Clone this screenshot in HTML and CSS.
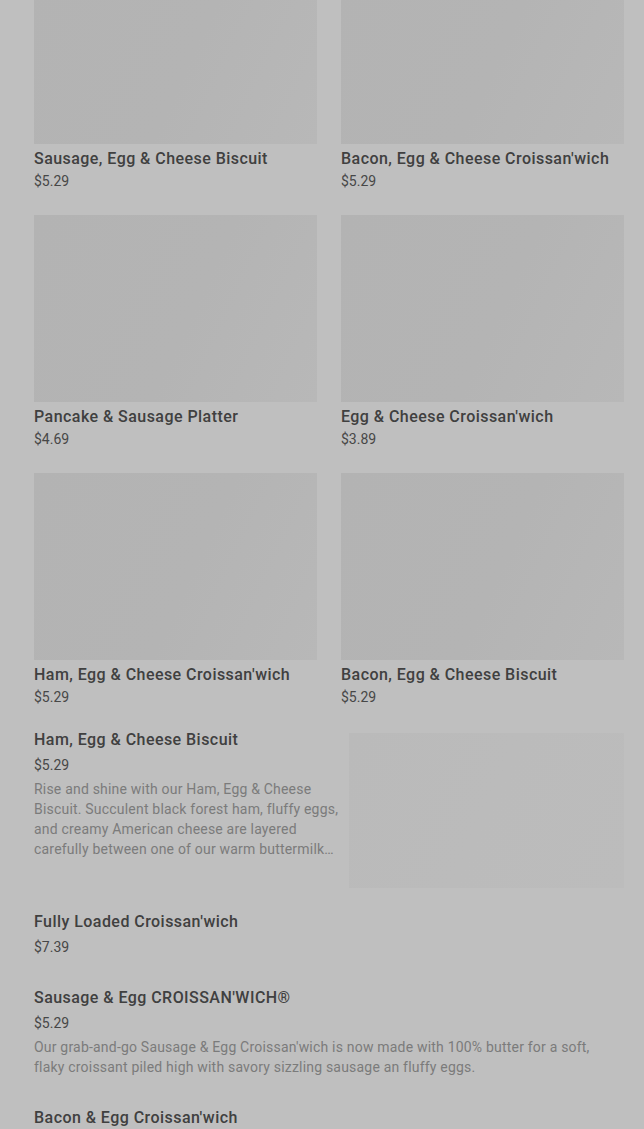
FILE: index.html
```html
<!DOCTYPE html>
<html>
<head>
  <title>Breakfast Menu</title>
  <link rel="stylesheet" href="styles.css">
</head>
<body>

  <div class="menu">
    <div class="card-grid">
      <div class="card">
        <div class="card-img"></div>
        <div class="item-title">Sausage, Egg &amp; Cheese Biscuit</div>
        <div class="item-price">$5.29</div>
      </div>
      <div class="card">
        <div class="card-img"></div>
        <div class="item-title">Bacon, Egg &amp; Cheese Croissan'wich</div>
        <div class="item-price">$5.29</div>
      </div>
      <div class="card">
        <div class="card-img"></div>
        <div class="item-title">Pancake &amp; Sausage Platter</div>
        <div class="item-price">$4.69</div>
      </div>
      <div class="card">
        <div class="card-img"></div>
        <div class="item-title">Egg &amp; Cheese Croissan'wich</div>
        <div class="item-price">$3.89</div>
      </div>
      <div class="card">
        <div class="card-img"></div>
        <div class="item-title">Ham, Egg &amp; Cheese Croissan'wich</div>
        <div class="item-price">$5.29</div>
      </div>
      <div class="card">
        <div class="card-img"></div>
        <div class="item-title">Bacon, Egg &amp; Cheese Biscuit</div>
        <div class="item-price">$5.29</div>
      </div>
    </div>

    <div class="item-list">
      <div class="list-item with-image">
        <div class="list-text">
          <div class="item-title">Ham, Egg &amp; Cheese Biscuit</div>
          <div class="item-price">$5.29</div>
          <div class="item-desc clamp">Rise and shine with our Ham, Egg &amp; Cheese Biscuit. Succulent black forest ham, fluffy eggs, and creamy American cheese are layered carefully between one of our warm buttermilk biscuits for a hearty start to your morning.</div>
        </div>
        <div class="list-img"></div>
      </div>

      <div class="list-item">
        <div class="list-text">
          <div class="item-title">Fully Loaded Croissan'wich</div>
          <div class="item-price">$7.39</div>
        </div>
      </div>

      <div class="list-item">
        <div class="list-text">
          <div class="item-title">Sausage &amp; Egg CROISSAN'WICH®</div>
          <div class="item-price">$5.29</div>
          <div class="item-desc">Our grab-and-go Sausage &amp; Egg Croissan'wich is now made with 100% butter for a soft, flaky croissant piled high with savory sizzling sausage an fluffy eggs.</div>
        </div>
      </div>

      <div class="list-item">
        <div class="list-text">
          <div class="item-title">Bacon &amp; Egg Croissan'wich</div>
          <div class="item-price">$5.29</div>
        </div>
      </div>
    </div>
  </div>

</body>
</html>
```

FILE: styles.css
```css
* {
  box-sizing: border-box;
}

html, body {
  height: 100%;
  overflow: hidden;
}

body {
  margin: 0;
  background: #bfbfbf;
  font-family: Roboto, "Noto Sans", Arial, sans-serif;
}

.menu {
  padding: 0 20px 0 34px;
}

.card-grid {
  display: grid;
  grid-template-columns: 1fr 1fr;
  column-gap: 24px;
  row-gap: 23px;
  margin-top: -43px;
}

.card-img {
  height: 187px;
  background: linear-gradient(115deg, #b3b3b3 0%, #b4b4b4 55%, #b8b8b8 100%);
}

.item-title {
  margin-top: 3px;
  font-size: 16px;
  line-height: 24px;
  font-weight: 500;
  letter-spacing: 0.45px;
  color: #404040;
  white-space: nowrap;
}

.item-price {
  font-size: 14px;
  line-height: 21px;
  color: #474747;
}

/* List rows below the grid */
.item-list {
  margin-top: 20px;
}

.list-item {
  display: flex;
  align-items: flex-start;
  gap: 10px;
  padding-bottom: 29px;
}

.list-item .item-title {
  margin-top: 0;
}

.list-item .item-price {
  margin-top: 3px;
  line-height: 20px;
}

.list-item.with-image {
  padding-bottom: 22px;
}

.list-text {
  flex: 1;
  min-width: 0;
}

.item-desc {
  max-width: 585px;
  margin-top: 4px;
  font-size: 14px;
  line-height: 20px;
  letter-spacing: 0.2px;
  color: #7b7b7b;
}

.clamp {
  display: -webkit-box;
  -webkit-line-clamp: 4;
  -webkit-box-orient: vertical;
  overflow: hidden;
}

.list-img {
  width: 275px;
  height: 155px;
  margin-top: 5px;
  flex-shrink: 0;
  background: linear-gradient(115deg, #bababa 0%, #bcbcbc 100%);
}
```
